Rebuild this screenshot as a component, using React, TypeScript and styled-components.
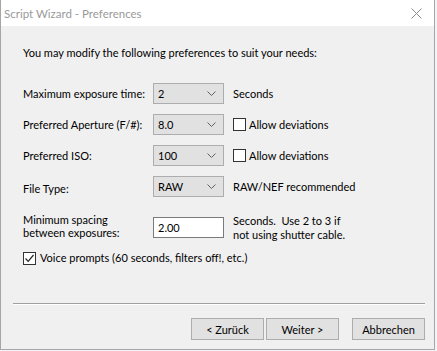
import React from "react";
import styled, { createGlobalStyle } from "styled-components";

const GlobalStyle = createGlobalStyle`
  html, body {
    margin: 0;
    padding: 0;
    background: #f4f3f8;
  }
  body {
    font-family: Lato, "Noto Sans", sans-serif;
    font-size: 11px;
    color: #000;
  }
`;

const Window = styled.div`
  width: 433px;
  height: 349px;
  border: 1px solid #a6a6a6;
  border-top: none;
  background: #f0f0f0;
  display: flex;
  flex-direction: column;
`;

const TitleBar = styled.div`
  height: 26px;
  flex-shrink: 0;
  background: #fff;
  display: flex;
  align-items: center;
  justify-content: space-between;
  padding: 0 12px 0 3px;
  font-size: 11.5px;
  color: #9a9a9a;
`;

const Body = styled.div`
  flex: 1;
  display: flex;
  flex-direction: column;
  padding: 19px 0 0 22px;
`;

const Intro = styled.div`
  line-height: 16px;
  margin-bottom: 22px;
`;

const Form = styled.div<{ $top?: number; $align?: string }>`
  display: grid;
  grid-template-columns: 130px 71px 1fr;
  row-gap: 10px;
  align-items: ${(p) => p.$align ?? "center"};
  margin-top: ${(p) => p.$top ?? 0}px;
`;

const Label = styled.div<{ $drop?: number; $lh?: number }>`
  line-height: ${(p) => p.$lh ?? 14}px;
  white-space: nowrap;
  padding-top: ${(p) => p.$drop ?? 0}px;
`;

const Note = styled.div<{ $drop?: number }>`
  line-height: 14px;
  white-space: nowrap;
  padding-left: 9px;
  padding-top: ${(p) => p.$drop ?? 0}px;
  display: flex;
  align-items: center;
  gap: 3px;
`;

const Combo = styled.div`
  height: 19px;
  border: 1px solid #adadad;
  background: #e1e1e1;
  display: flex;
  align-items: center;
  justify-content: space-between;
  padding: 0 7px 0 4px;
`;

const TextBox = styled.div`
  height: 19px;
  margin-top: 4px;
  border: 1px solid #7a7a7a;
  background: #fff;
  display: flex;
  align-items: center;
  padding-left: 4px;
`;

const Box = styled.span`
  width: 11px;
  height: 11px;
  border: 1px solid #333;
  background: #fff;
  display: inline-flex;
  align-items: center;
  justify-content: center;
  flex-shrink: 0;
`;

const VoiceRow = styled.div`
  display: flex;
  align-items: center;
  gap: 4px;
  height: 14px;
  margin-top: 9px;
  line-height: 14px;
`;

const Separator = styled.div`
  margin: 38px 9px 0 -10px;
  border-top: 1px solid #a0a0a0;
  border-bottom: 1px solid #fff;
`;

const Buttons = styled.div`
  display: flex;
  justify-content: flex-end;
  margin: 13px 9px 0 0;
`;

const Button = styled.button<{ $gap?: number }>`
  width: 73px;
  height: 22px;
  margin-left: ${(p) => p.$gap ?? 0}px;
  border: 1px solid #adadad;
  background: #e1e1e1;
  font-family: inherit;
  font-size: 11px;
  color: #000;
  padding: 0;
`;

function Chevron() {
  return (
    <svg width="9" height="5" viewBox="0 0 9 5">
      <path d="M0.5 0.5 L4.5 4.5 L8.5 0.5" fill="none" stroke="#606060" strokeWidth="1" />
    </svg>
  );
}

function CheckBox({ checked }: { checked?: boolean }) {
  return (
    <Box>
      {checked && (
        <svg width="11" height="11" viewBox="0 0 11 11">
          <path d="M1.5 5.5 L4.2 8.3 L9.5 2" fill="none" stroke="#222" strokeWidth="1.2" />
        </svg>
      )}
    </Box>
  );
}

function Select({ value }: { value: string }) {
  return (
    <Combo>
      <span>{value}</span>
      <Chevron />
    </Combo>
  );
}

export default function App() {
  return (
    <>
      <GlobalStyle />
      <Window>
        <TitleBar>
          <span>Script Wizard - Preferences</span>
          <svg width="11" height="11" viewBox="0 0 11 11">
            <path d="M0.5 0.5 L10.5 10.5 M10.5 0.5 L0.5 10.5" stroke="#8a8a8a" strokeWidth="1" />
          </svg>
        </TitleBar>
        <Body>
          <Intro>You may modify the following preferences to suit your needs:</Intro>
          <Form>
            <Label>Maximum exposure time:</Label>
            <Select value="2" />
            <Note>Seconds</Note>

            <Label>Preferred Aperture (F/#):</Label>
            <Select value="8.0" />
            <Note>
              <CheckBox />
              Allow deviations
            </Note>

            <Label>Preferred ISO:</Label>
            <Select value="100" />
            <Note>
              <CheckBox />
              Allow deviations
            </Note>

            <Label $drop={5}>File Type:</Label>
            <Select value="RAW" />
            <Note>RAW/NEF recommended</Note>
          </Form>
          <Form $top={16} $align="start">
            <Label $lh={13}>
              Minimum spacing
              <br />
              between exposures:
            </Label>
            <TextBox>2.00</TextBox>
            <Note $drop={1}>
              Seconds.&nbsp; Use 2 to 3 if
              <br />
              not using shutter cable.
            </Note>
          </Form>
          <VoiceRow>
            <CheckBox checked />
            Voice prompts (60 seconds, filters off!, etc.)
          </VoiceRow>
          <Separator />
          <Buttons>
            <Button>&lt; Zurück</Button>
            <Button $gap={2}>Weiter &gt;</Button>
            <Button $gap={13}>Abbrechen</Button>
          </Buttons>
        </Body>
      </Window>
    </>
  );
}
